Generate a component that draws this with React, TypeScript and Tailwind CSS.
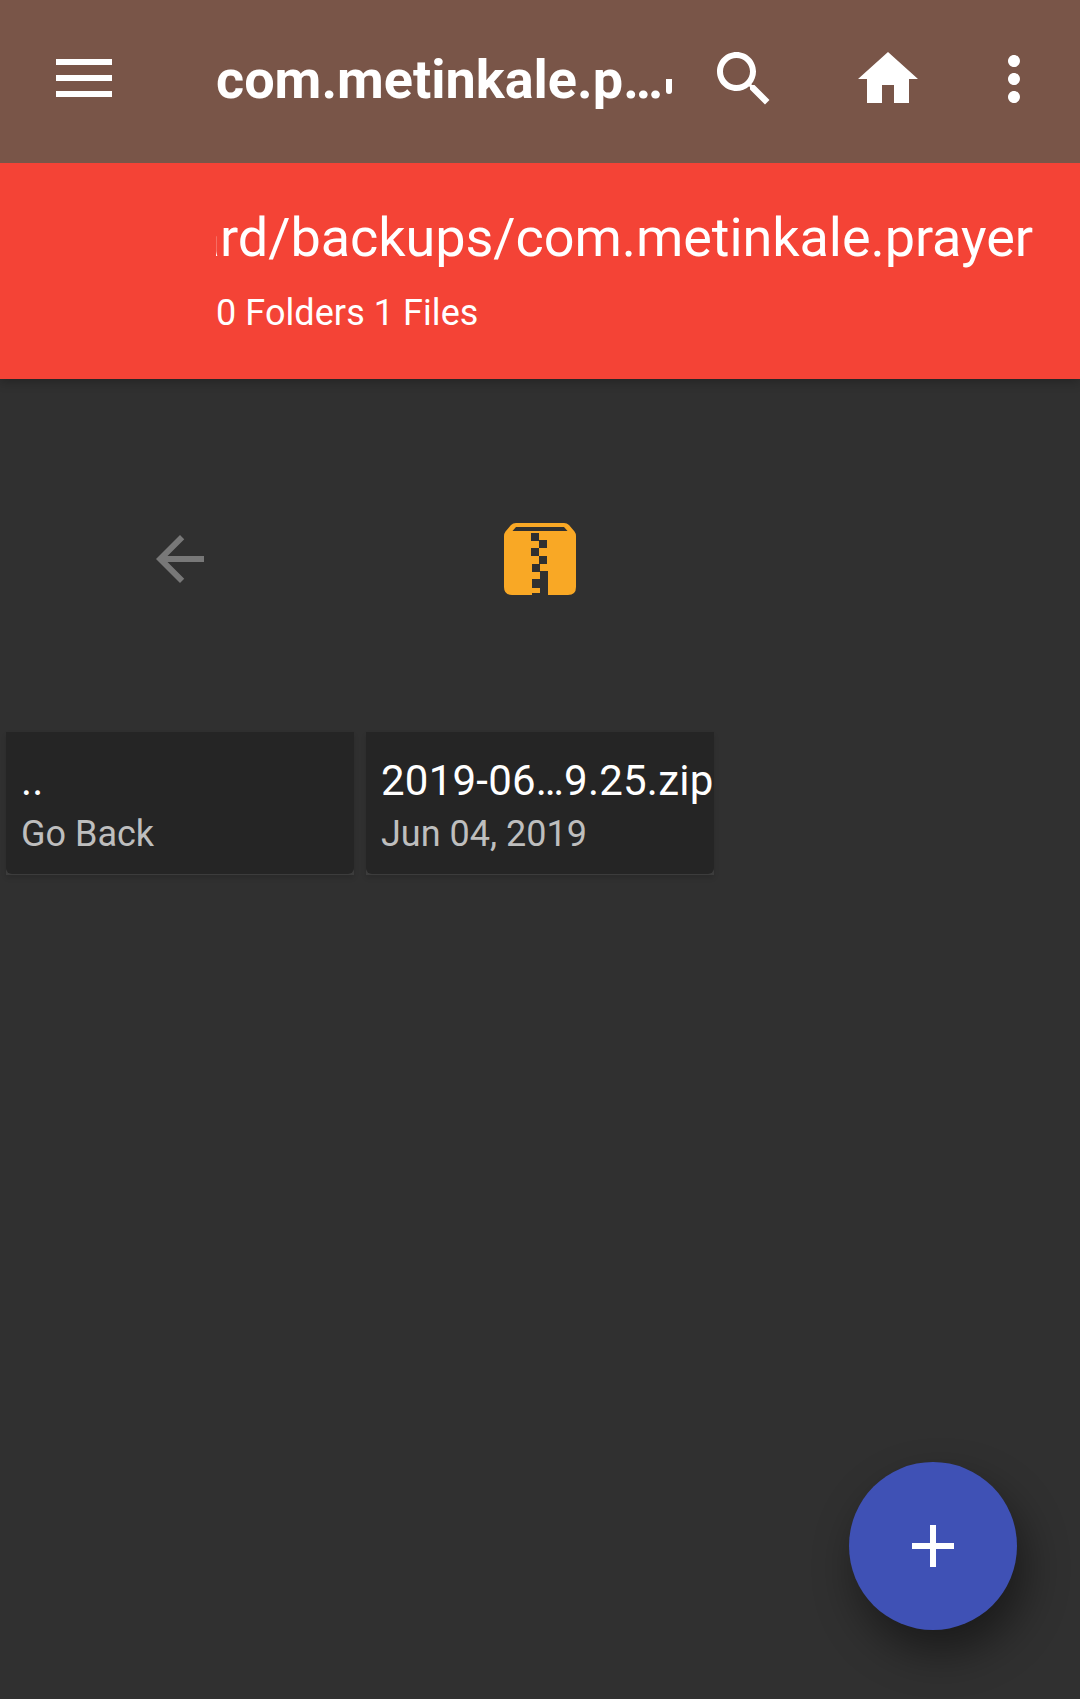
import React from "react";

function MenuIcon() {
  return (
    <svg className="h-[38px] w-14" viewBox="0 0 56 38" fill="#fff">
      <path d="M0 0h56v6H0zM0 16h56v6H0zM0 32h56v6H0z" />
    </svg>
  );
}

function Icon({ d, className }: { d: string; className: string }) {
  return (
    <svg className={className} viewBox="0 0 24 24" fill="currentColor">
      <path d={d} />
    </svg>
  );
}

const SEARCH =
  "M15.5 14h-.79l-.28-.27C15.41 12.59 16 11.11 16 9.5 16 5.91 13.09 3 9.5 3S3 5.91 3 9.5 5.91 16 9.5 16c1.61 0 3.09-.59 4.23-1.57l.27.28v.79l5 4.99L20.49 19l-4.99-5zm-6 0C7.01 14 5 11.99 5 9.5S7.01 5 9.5 5 14 7.01 14 9.5 11.99 14 9.5 14z";
const HOME = "M10 20v-6h4v6h5v-8h3L12 3 2 12h3v8z";
const MORE =
  "M12 8c1.1 0 2-.9 2-2s-.9-2-2-2-2 .9-2 2 .9 2 2 2zm0 2c-1.1 0-2 .9-2 2s.9 2 2 2 2-.9 2-2-.9-2-2-2zm0 6c-1.1 0-2 .9-2 2s.9 2 2 2 2-.9 2-2-.9-2-2-2z";
const BACK = "M20 11H7.83l5.59-5.59L12 4l-8 8 8 8 1.41-1.41L7.83 13H20v-2z";
const PLUS = "M19 13h-6v6h-2v-6H5v-2h6V5h2v6h6v2z";

function ZipIcon() {
  return (
    <svg className="size-[72px]" viewBox="0 0 72 72">
      <path
        fill="#f9a825"
        fillRule="evenodd"
        d="M12 0H60Q63 0 65 2L70.500 8.500Q72 10.500 72 13V64Q72 72 64 72H44V48H36V41H43V33H35V25H43V17H35V10H27V18H35V25H27V33H35V41H28V49H36V56H28V65H36V70H28V72H8Q0 72 0 64V13Q0 10.500 1.500 8.500L7 2Q9 0 12 0ZM12 4L8.500 8H63.500L60 4Z"
      />
    </svg>
  );
}

function Tile({ icon, title, subtitle }: { icon: React.ReactNode; title: string; subtitle: string }) {
  return (
    <div className="flex w-[348px] flex-col">
      <div className="flex h-[346px] items-center justify-center">{icon}</div>
      <div className="h-[143px] bg-[#3c3c3c] shadow-[0_3px_5px_rgba(0,0,0,0.12)]">
        <div className="h-[142px] overflow-hidden rounded-b-md bg-[#252525] pt-6 pl-[15px] whitespace-nowrap">
          <div className="h-[50px] text-[42px] leading-[50px] tracking-[0.22px] text-white">{title}</div>
          <div className="mt-1.5 text-[36px] leading-[44px] text-[#bebebe]">{subtitle}</div>
        </div>
      </div>
    </div>
  );
}

export default function App() {
  return (
    <div className="relative flex h-[1699px] w-[1080px] flex-col overflow-hidden bg-[#303030] font-['Roboto',sans-serif] text-white">
      <header className="z-10 shadow-[0_3px_10px_rgba(0,0,0,0.25)]">
        <div className="flex h-[163px] items-center bg-[#795548] pb-[5px] pl-14">
          <div className="pb-0.5">
            <MenuIcon />
          </div>
          <div className="ml-[104px] flex w-[456px] items-center overflow-hidden">
            <h1 className="w-[450px] shrink-0 pt-px text-[54px] leading-[64px] font-bold whitespace-nowrap">
              com.metinkale.p…
            </h1>
            <span className="mt-[14px] h-[15px] w-1.5 shrink-0 rounded-b-full bg-white" />
          </div>
          <Icon d={SEARCH} className="ml-9 size-[72px]" />
          <Icon d={HOME} className="ml-[72px] size-[72px]" />
          <Icon d={MORE} className="ml-[54px] size-[72px]" />
        </div>
        <div className="h-[216px] bg-[#f44336] pt-[43px] pr-[47px] pl-[216px]">
          <div className="flex h-16 justify-end overflow-hidden text-[54px] leading-[64px] tracking-[-0.06px] whitespace-nowrap">
            <span className="shrink-0">/sdcard/backups/com.metinkale.prayer</span>
          </div>
          <div className="mt-[21px] text-[36px] leading-[44px] tracking-[0.07px]">0 Folders 1 Files</div>
        </div>
      </header>
      <main className="flex gap-3 px-1.5 pt-[7px]">
        <Tile icon={<Icon d={BACK} className="size-[72px] text-[#787878]" />} title=".." subtitle="Go Back" />
        <Tile icon={<ZipIcon />} title="2019-06…9.25.zip" subtitle="Jun 04, 2019" />
      </main>
      <button className="absolute top-[1462px] left-[849px] flex size-[168px] items-center justify-center rounded-full bg-[#3f51b5] shadow-[8px_22px_44px_rgba(0,0,0,0.45)]">
        <Icon d={PLUS} className="size-[72px]" />
      </button>
    </div>
  );
}
